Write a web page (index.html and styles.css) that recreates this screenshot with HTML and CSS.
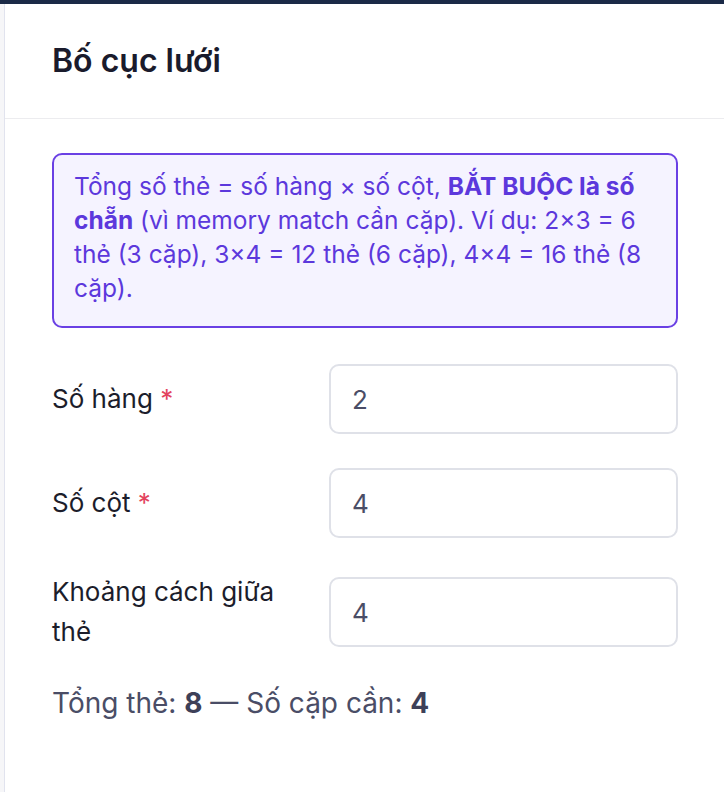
FILE: index.html
```html
<!DOCTYPE html>
<html lang="vi">
  <head>
    <meta charset="UTF-8" />
    <meta name="viewport" content="width=device-width, initial-scale=1.0" />
    <title>Bố cục lưới</title>
    <link rel="stylesheet" href="styles.css">
  </head>
  <body>
    <div class="topbar"></div>
    <div class="shell">
      <section class="panel">
        <header class="panel-header">
          <h2>Bố cục lưới</h2>
        </header>
        <div class="panel-body">
          <div class="notice">
            Tổng số thẻ = số hàng × số cột, <b>BẮT BUỘC là số chẵn</b> (vì memory match cần cặp). Ví dụ: 2×3 = 6 thẻ (3 cặp), 3×4 = 12 thẻ (6 cặp), 4×4 = 16 thẻ (8 cặp).
          </div>

          <form class="grid-form" id="gridForm">
            <div class="form-row">
              <label for="rows">Số hàng <span class="req">*</span></label>
              <input type="number" id="rows" name="rows" value="2" />
            </div>
            <div class="form-row">
              <label for="cols">Số cột <span class="req">*</span></label>
              <input type="number" id="cols" name="cols" value="4" />
            </div>
            <div class="form-row">
              <label for="gap">Khoảng cách giữa thẻ</label>
              <input type="number" id="gap" name="gap" value="4" />
            </div>
          </form>

          <p class="summary">
            Tổng thẻ: <b id="total">8</b> — Số cặp cần: <b id="pairs">4</b>
          </p>
        </div>
      </section>
    </div>

    <script>
      function updateSummary() {
        let rows = parseInt(document.getElementById("rows").value) || 0;
        let cols = parseInt(document.getElementById("cols").value) || 0;
        let total = rows * cols;
        document.getElementById("total").textContent = total;
        document.getElementById("pairs").textContent = Math.floor(total / 2);
      }

      document
        .getElementById("gridForm")
        .addEventListener("input", updateSummary);
    </script>
  </body>
</html>
```

FILE: styles.css
```css
body {
  margin: 0;
  font-family: Inter, "Noto Sans", sans-serif;
  background-color: #f6f6f8;
  color: #1c1d2b;
}
.topbar {
  height: 4px;
  background: #1b2a47;
}
.shell {
  padding-left: 4px;
  min-height: 788px;
  display: flex;
}
.panel {
  flex: 1;
  background: white;
  border-left: 1px solid #e1e3ee;
}
.panel-header {
  padding: 36px 47px;
  border-bottom: 1px solid #ececef;
}
.panel-header h2 {
  margin: 0;
  font-size: 32px;
  line-height: 42px;
  font-weight: 600;
  color: #1a1b2c;
}
.panel-body {
  padding: 34px 46px 40px 47px;
}
.notice {
  background: #f5f3ff;
  border: 2px solid #6a40e4;
  border-radius: 10px;
  padding: 14px 20px 21px;
  font-size: 24.5px;
  line-height: 34px;
  color: #5c38dc;
}
.notice b {
  font-weight: 700;
}
.grid-form {
  margin-top: 36px;
  display: flex;
  flex-direction: column;
  gap: 34px;
}
.form-row {
  display: grid;
  grid-template-columns: 250px 1fr;
  column-gap: 27px;
  align-items: center;
}
.form-row label {
  font-size: 26px;
  line-height: 40px;
  color: #1c1d2b;
}
.req {
  color: #e3435d;
}
.form-row input {
  box-sizing: border-box;
  height: 70px;
  width: 100%;
  padding: 0 21px;
  border: 2px solid #dfe1e8;
  border-radius: 10px;
  font-family: inherit;
  font-size: 26px;
  color: #4a4d66;
  background: white;
  -moz-appearance: textfield;
}
.form-row input::-webkit-outer-spin-button,
.form-row input::-webkit-inner-spin-button {
  -webkit-appearance: none;
  margin: 0;
}
.summary {
  margin: 31px 0 0;
  font-size: 28px;
  line-height: 40px;
  color: #4a4d66;
}
.summary b {
  color: #3d4058;
}
```
